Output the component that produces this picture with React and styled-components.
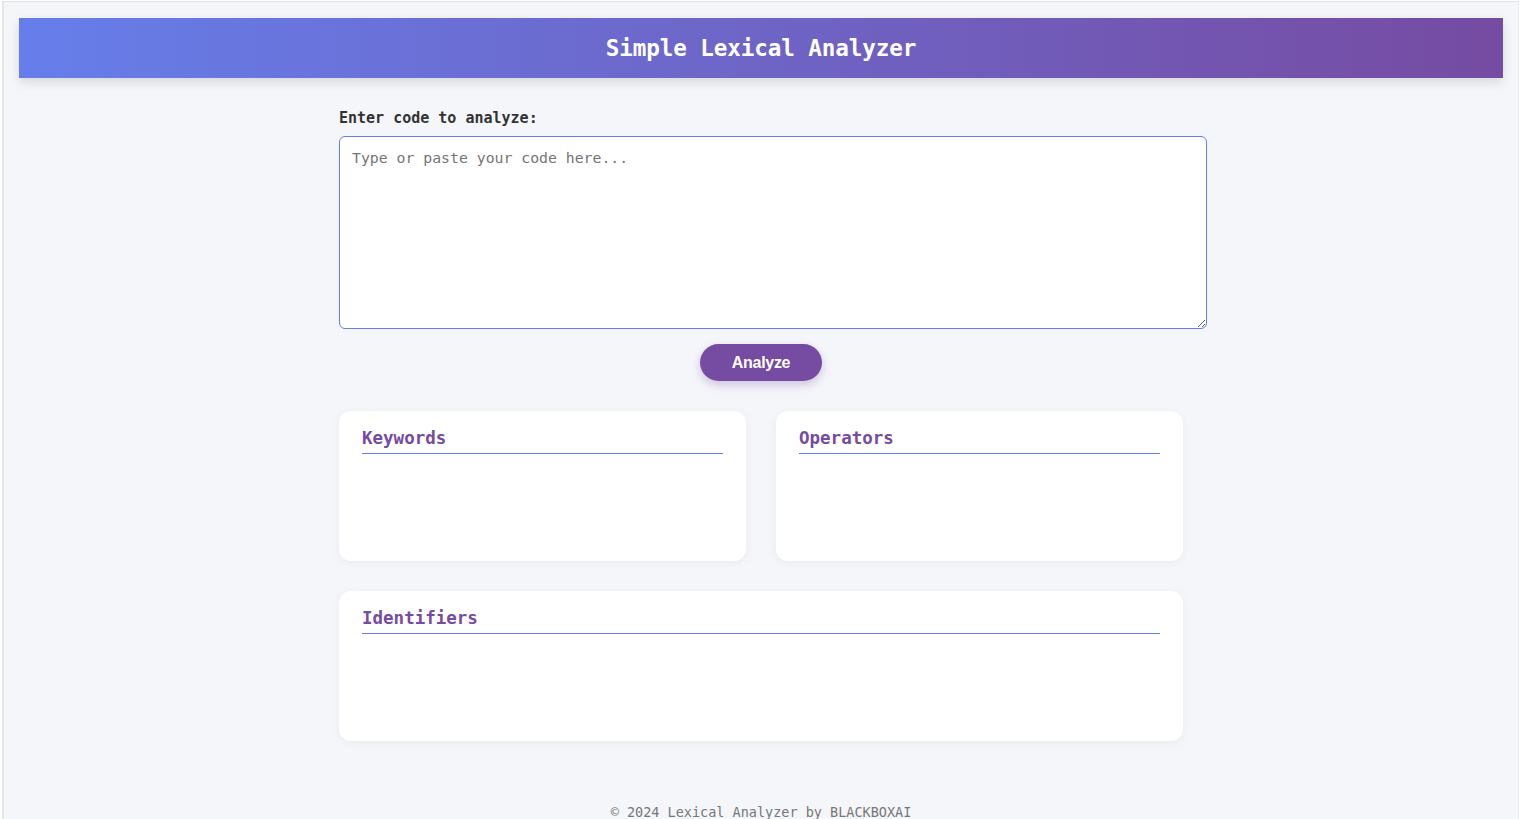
import React, { useState } from "react";
import styled, { createGlobalStyle } from "styled-components";

const GlobalStyle = createGlobalStyle`
	html, body {
		margin: 0;
		padding: 0;
		background: #ffffff;
	}
	* {
		box-sizing: border-box;
	}
`;

const Frame = styled.div`
	margin: 1px 1px 0 2px;
	border-top: 1px solid #e3e3e6;
	border-left: 2px solid #e6e6e9;
	border-right: 1px solid #ececef;
	background-color: #f5f6fa;
	min-height: 818px;
	padding: 16px 15px 0 15px;
	font-family: "DejaVu Sans Mono", monospace;
	color: #333;
`;

const Header = styled.header`
	height: 60px;
	display: flex;
	align-items: center;
	justify-content: center;
	background: linear-gradient(90deg, #667eea 0%, #764ba2 100%);
	box-shadow: 0 4px 10px rgba(0, 0, 0, 0.12);
`;

const Title = styled.h1`
	margin: 0;
	color: #fff;
	font-size: 22.6px;
	font-weight: bold;
	letter-spacing: -0.1px;
`;

const Main = styled.main`
	width: 844px;
	margin: 0 auto;
	padding-top: 31px;
	display: flex;
	flex-direction: column;
`;

const Label = styled.label`
	font-size: 15px;
	font-weight: bold;
	color: #333;
	margin-bottom: 9px;
`;

const CodeInput = styled.textarea`
	width: calc(100% + 24px);
	height: 193px;
	padding: 12px;
	border: 1px solid #667eea;
	border-radius: 6px;
	background: #fff;
	font-family: "DejaVu Sans Mono", monospace;
	font-size: 14.8px;
	color: #333;
	resize: vertical;
	outline: none;

	&::placeholder {
		color: #757575;
	}
`;

const AnalyzeButton = styled.button`
	align-self: center;
	margin-top: 15px;
	height: 37px;
	width: 122px;
	border: none;
	border-radius: 20px;
	background-color: #764ba2;
	color: #fff;
	font-family: "Liberation Sans", Arial, sans-serif;
	font-size: 16px;
	font-weight: bold;
	letter-spacing: -0.3px;
	cursor: pointer;
	box-shadow: 0 4px 10px rgba(118, 75, 162, 0.3);
`;

const Results = styled.section`
	margin-top: 30px;
	display: grid;
	grid-template-columns: 1fr 1fr;
	gap: 30px;
`;

const Card = styled.div`
	grid-column: ${(props) => (props.wide ? "1 / -1" : "auto")};
	height: 150px;
	background: #fff;
	border-radius: 12px;
	padding: 15px 23px;
	box-shadow: 0 2px 10px rgba(0, 0, 0, 0.05);
`;

const CardTitle = styled.h2`
	margin: 0;
	font-size: 17.5px;
	font-weight: bold;
	color: #764ba2;
	padding-bottom: 3px;
	border-bottom: 1px solid #667eea;
	line-height: 24px;
`;

const TokenList = styled.ul`
	list-style: none;
	margin: 10px 0 0;
	padding: 0;
	font-size: 14px;
`;

const Footer = styled.footer`
	text-align: center;
	margin-top: 63px;
	font-size: 13.5px;
	color: #777;
`;

const KEYWORDS = ["if", "else", "while", "for", "return", "int", "float", "char", "void"];

export default function App() {
	const [code, setCode] = useState("");
	const [tokens, setTokens] = useState({ keywords: [], operators: [], identifiers: [] });

	const analyze = () => {
		const words = code.match(/[A-Za-z_]\w*/g) || [];
		const ops = code.match(/[+\-*/=<>!&|%]+/g) || [];
		setTokens({
			keywords: [...new Set(words.filter((w) => KEYWORDS.includes(w)))],
			operators: [...new Set(ops)],
			identifiers: [...new Set(words.filter((w) => !KEYWORDS.includes(w)))],
		});
	};

	return (
		<Frame>
			<GlobalStyle />
			<Header>
				<Title>Simple Lexical Analyzer</Title>
			</Header>
			<Main>
				<Label htmlFor="code">Enter code to analyze:</Label>
				<CodeInput
					id="code"
					value={code}
					onChange={(e) => setCode(e.target.value)}
					placeholder="Type or paste your code here..."
				/>
				<AnalyzeButton onClick={analyze}>Analyze</AnalyzeButton>
				<Results>
					<Card>
						<CardTitle>Keywords</CardTitle>
						<TokenList>
							{tokens.keywords.map((t) => (
								<li key={t}>{t}</li>
							))}
						</TokenList>
					</Card>
					<Card>
						<CardTitle>Operators</CardTitle>
						<TokenList>
							{tokens.operators.map((t) => (
								<li key={t}>{t}</li>
							))}
						</TokenList>
					</Card>
					<Card wide>
						<CardTitle>Identifiers</CardTitle>
						<TokenList>
							{tokens.identifiers.map((t) => (
								<li key={t}>{t}</li>
							))}
						</TokenList>
					</Card>
				</Results>
				<Footer>© 2024 Lexical Analyzer by BLACKBOXAI</Footer>
			</Main>
		</Frame>
	);
}
